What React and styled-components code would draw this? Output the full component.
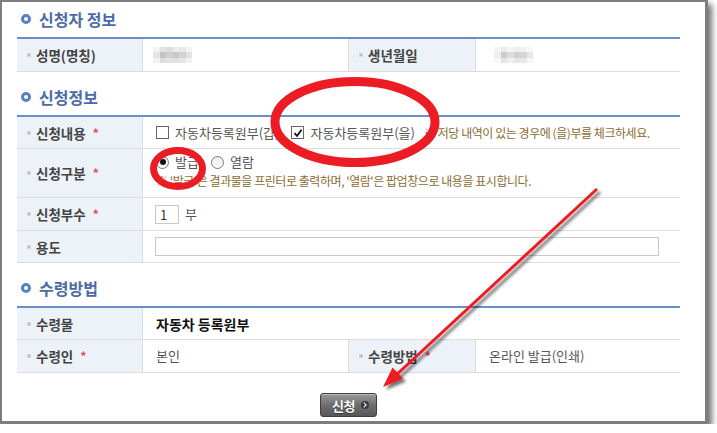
import React from "react";
import styled, { createGlobalStyle } from "styled-components";

const GlobalStyle = createGlobalStyle`
  body {
    margin: 0;
    background: #fff;
    font-family: "Noto Sans CJK KR", "Noto Sans", sans-serif;
  }
`;

const Frame = styled.div`
  position: relative;
  box-sizing: border-box;
  width: 708px;
  height: 424px;
  padding: 7px 0 0 15px;
  background: #fff;
  border-style: solid;
  border-color: #7d7d7d;
  border-width: 2px 3px 3px 2px;
  box-shadow: 4px 4px 6px rgba(0, 0, 0, 0.55);
`;

const Section = styled.section`
  width: 663px;
  & + & {
    margin-top: 15px;
  }
`;

const SectionTitle = styled.h2`
  display: flex;
  align-items: center;
  gap: 8px;
  height: 20px;
  margin: 0 0 8px;
  padding-left: 4px;
  font-size: 16px;
  font-weight: 700;
  line-height: 20px;
  color: #4b6ba8;
`;

const TitleIcon = styled.span`
  box-sizing: border-box;
  width: 10px;
  height: 10px;
  border: 3px solid #5a7ec1;
  border-radius: 50%;
  background: #fff;
`;

const Table = styled.div`
  border-top: 2px solid #6a8ec8;
`;

const Row = styled.div`
  display: grid;
  grid-template-columns: ${(p) => (p.$split ? "126px 206px 127px 1fr" : "126px 1fr")};
  box-sizing: border-box;
  height: ${(p) => p.$h || 33}px;
  border-bottom: 1px solid #dcdcdc;
`;

const Label = styled.div`
  display: flex;
  align-items: center;
  gap: 5px;
  padding-left: 10px;
  background: #edf2f9;
  border-right: 1px solid #dcdcdc;
  font-size: 13.5px;
  font-weight: 700;
  color: #444;
  line-height: 16px;
`;

const Bullet = styled.span`
  width: 4px;
  height: 4px;
  background: #bdbdbd;
  border: 1px solid #d6d6d6;
  box-sizing: border-box;
`;

const Required = styled.span`
  margin-left: 2px;
  font-size: 12px;
  color: #e8475a;
`;

const Value = styled.div`
  display: flex;
  flex-direction: ${(p) => (p.$stack ? "column" : "row")};
  align-items: ${(p) => (p.$stack ? "flex-start" : "center")};
  gap: ${(p) => (p.$stack ? "4px" : "0")};
  padding: ${(p) => (p.$stack ? "5px 13px 0" : "0 13px")};
  border-right: ${(p) => (p.$divider ? "1px solid #dcdcdc" : "none")};
  font-size: 13px;
  color: #555;
  line-height: 16px;
  white-space: nowrap;
`;

const Mosaic = styled.div`
  display: grid;
  grid-template-columns: repeat(6, 6.5px);
  grid-auto-rows: 5.5px;
  margin-left: ${(p) => p.$offset || 0}px;
`;

const MosaicCell = styled.span`
  background: ${(p) => p.$shade};
`;

const Options = styled.div`
  display: flex;
  align-items: center;
  height: 16px;
`;

const Option = styled.label`
  display: flex;
  align-items: center;
  gap: 6px;
  margin-right: ${(p) => p.$space || 0}px;
  color: #555;
  font-size: 13px;
`;

const CheckBox = styled.span`
  box-sizing: border-box;
  display: flex;
  align-items: center;
  justify-content: center;
  width: 13px;
  height: 13px;
  border: 1px solid #666;
  background: #fff;
`;

const Radio = styled.span`
  box-sizing: border-box;
  display: flex;
  align-items: center;
  justify-content: center;
  width: 13px;
  height: 13px;
  border: 1px solid #7a7a7a;
  border-radius: 50%;
  background: linear-gradient(#e9e9e9, #fff);
  &::after {
    content: "";
    display: ${(p) => (p.$on ? "block" : "none")};
    width: 6px;
    height: 6px;
    border-radius: 50%;
    background: #111;
  }
`;

const Note = styled.span`
  margin-left: ${(p) => p.$indent || 0}px;
  font-size: 12px;
  letter-spacing: -0.45px;
  color: #8d6b32;
  line-height: 14px;
`;

const SmallInput = styled.input`
  box-sizing: border-box;
  width: ${(p) => p.$w}px;
  height: 19px;
  margin: 0 0 0 -1px;
  padding: 0 4px;
  border: 1px solid #c9c9c9;
  font-family: inherit;
  font-size: 13px;
  color: #333;
  outline: none;
`;

const Unit = styled.span`
  margin-left: 6px;
`;

const StrongValue = styled.span`
  font-size: 14px;
  font-weight: 700;
  color: #111;
`;

const ButtonBar = styled.div`
  display: flex;
  justify-content: center;
  width: 663px;
  margin-top: 20px;
`;

const SubmitButton = styled.button`
  display: flex;
  align-items: center;
  gap: 6px;
  box-sizing: border-box;
  width: 57px;
  height: 24px;
  padding: 0 0 0 11px;
  border: 1px solid #3f3f3f;
  border-radius: 3px;
  background: linear-gradient(#9a9a9a, #6e6e6e 50%, #585858);
  box-shadow: inset 0 1px 0 rgba(255, 255, 255, 0.35);
  font-family: inherit;
  font-size: 13px;
  font-weight: 700;
  letter-spacing: -0.5px;
  color: #fff;
  text-shadow: 0 1px 1px #333;
`;

const ArrowDot = styled.span`
  display: flex;
  align-items: center;
  justify-content: center;
  width: 8px;
  height: 8px;
  border-radius: 50%;
  background: #3a3a3a;
`;

const Overlay = styled.svg`
  position: absolute;
  top: -2px;
  left: -2px;
  pointer-events: none;
  overflow: visible;
`;

const shadesA = [
  "#f2f2f2", "#e3e3e3", "#dedede", "#ececec", "#e8e8e8", "#f4f4f4",
  "#e6e6e6", "#c4c4c4", "#cfcfcf", "#c9c9c9", "#d3d3d3", "#e2e2e2",
  "#f3f3f3", "#dcdcdc", "#e1e1e1", "#dedede", "#e5e5e5", "#f2f2f2",
];
const shadesB = [
  "#f4f4f4", "#ececec", "#f3f3f3", "#ededed", "#f1f1f1", "#f7f7f7",
  "#eeeeee", "#cdcdcd", "#dcdcdc", "#d2d2d2", "#d6d6d6", "#e7e7e7",
  "#f6f6f6", "#e4e4e4", "#efefef", "#e6e6e6", "#e9e9e9", "#f5f5f5",
];

function Blurred({ shades, offset }) {
  return (
    <Mosaic $offset={offset}>
      {shades.map((s, i) => (
        <MosaicCell key={i} $shade={s} />
      ))}
    </Mosaic>
  );
}

function Check() {
  return (
    <svg width="10" height="10" viewBox="0 0 10 10">
      <path d="M1.5 5.2 L4 7.8 L8.6 1.8" fill="none" stroke="#111" strokeWidth="1.8" />
    </svg>
  );
}

function FieldLabel({ children, required }) {
  return (
    <Label>
      <Bullet />
      {children}
      {required && <Required>*</Required>}
    </Label>
  );
}

export default function App() {
  return (
    <>
      <GlobalStyle />
      <Frame>
        <Section>
          <SectionTitle>
            <TitleIcon />
            신청자 정보
          </SectionTitle>
          <Table>
            <Row $split>
              <FieldLabel>성명(명칭)</FieldLabel>
              <Value $divider>
                <Blurred shades={shadesA} offset={-3} />
              </Value>
              <FieldLabel>생년월일</FieldLabel>
              <Value>
                <Blurred shades={shadesB} offset={5} />
              </Value>
            </Row>
          </Table>
        </Section>

        <Section>
          <SectionTitle>
            <TitleIcon />
            신청정보
          </SectionTitle>
          <Table>
            <Row $h={32}>
              <FieldLabel required>신청내용</FieldLabel>
              <Value>
                <Option $space={12}>
                  <CheckBox />
                  자동차등록원부(갑)
                </Option>
                <Option>
                  <CheckBox>
                    <Check />
                  </CheckBox>
                  자동차등록원부(을)
                </Option>
                <Note $indent={9}>※ 저당 내역이 있는 경우에 (을)부를 체크하세요.</Note>
              </Value>
            </Row>
            <Row $h={49}>
              <FieldLabel required>신청구분</FieldLabel>
              <Value $stack>
                <Options>
                  <Option $space={12}>
                    <Radio $on />
                    발급
                  </Option>
                  <Option>
                    <Radio />
                    열람
                  </Option>
                </Options>
                <Note>
                  ※ '발급'은 결과물을 프린터로 출력하며, '열람'은 팝업창으로 내용을 표시합니다.
                </Note>
              </Value>
            </Row>
            <Row>
              <FieldLabel required>신청부수</FieldLabel>
              <Value>
                <SmallInput $w={24} defaultValue="1" />
                <Unit>부</Unit>
              </Value>
            </Row>
            <Row $h={32}>
              <FieldLabel>용도</FieldLabel>
              <Value>
                <SmallInput $w={504} defaultValue="" />
              </Value>
            </Row>
          </Table>
        </Section>

        <Section>
          <SectionTitle>
            <TitleIcon />
            수령방법
          </SectionTitle>
          <Table>
            <Row $h={32}>
              <FieldLabel>수령물</FieldLabel>
              <Value>
                <StrongValue>자동차 등록원부</StrongValue>
              </Value>
            </Row>
            <Row $split>
              <FieldLabel required>수령인</FieldLabel>
              <Value $divider>본인</Value>
              <FieldLabel required>수령방법</FieldLabel>
              <Value>온라인 발급(인쇄)</Value>
            </Row>
          </Table>
        </Section>

        <ButtonBar>
          <SubmitButton type="button">
            신청
            <ArrowDot>
              <svg width="4" height="6" viewBox="0 0 4 6">
                <path d="M0.8 0.6 L3.2 3 L0.8 5.4" fill="none" stroke="#eee" strokeWidth="1.2" />
              </svg>
            </ArrowDot>
          </SubmitButton>
        </ButtonBar>

        <Overlay width="717" height="433" viewBox="0 0 717 433">
          <defs>
            <filter id="arrowShadow" x="-20%" y="-20%" width="140%" height="140%">
              <feDropShadow dx="3" dy="3" stdDeviation="1.4" floodColor="#000" floodOpacity="0.55" />
            </filter>
          </defs>
          <ellipse cx="355" cy="122" rx="80" ry="40.5" fill="none" stroke="#ec1c24" strokeWidth="9" />
          <ellipse cx="178" cy="168.5" rx="24.5" ry="18" fill="none" stroke="#ec1c24" strokeWidth="7" />
          <g filter="url(#arrowShadow)">
            <line x1="597" y1="189" x2="394" y2="377" stroke="#ec1c24" strokeWidth="3" />
            <polygon points="383,387 392.5,367.5 403,378.5" fill="#ec1c24" />
          </g>
        </Overlay>
      </Frame>
    </>
  );
}
